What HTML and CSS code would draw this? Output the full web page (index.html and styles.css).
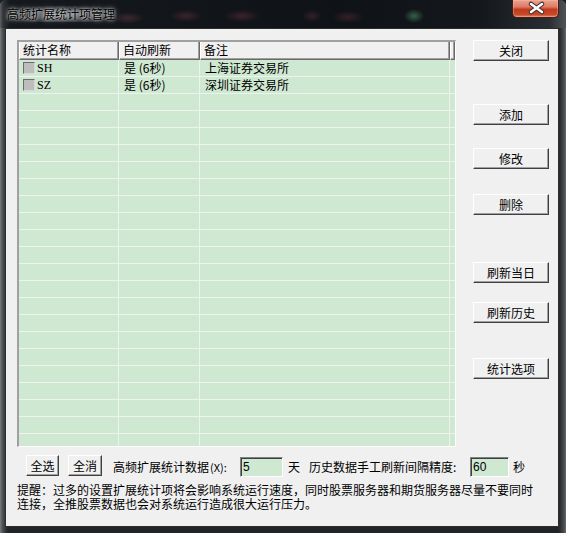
FILE: index.html
```html
<!DOCTYPE html>
<html lang="zh-CN">
<head>
<meta charset="utf-8">
<title>高频扩展统计项管理</title>
<link rel="stylesheet" href="styles.css">
</head>
<body>
<div class="window">
  <div class="titlebar">
    <div class="title">高频扩展统计项管理</div>
    <div class="close">
      <svg width="47" height="18" viewBox="0 0 47 18">
        <path d="M18 5 L29 13 M29 5 L18 13" stroke="#3a2a28" stroke-width="4.6" stroke-linecap="round" fill="none"/>
        <path d="M18 5 L29 13 M29 5 L18 13" stroke="#ffffff" stroke-width="2.6" stroke-linecap="round" fill="none"/>
      </svg>
    </div>
  </div>
  <div class="client">
    <div class="main">
      <div class="list">
        <div class="head">
          <div class="hcell">统计名称</div>
          <div class="hcell">自动刷新</div>
          <div class="hcell">备注</div>
          <div class="hcell"></div>
        </div>
        <div class="row">
          <div class="cell"><span class="check"></span><span class="code">SH</span></div>
          <div class="cell">是 (6秒)</div>
          <div class="cell">上海证券交易所</div>
          <div class="cell"></div>
        </div>
        <div class="row">
          <div class="cell"><span class="check"></span><span class="code">SZ</span></div>
          <div class="cell">是 (6秒)</div>
          <div class="cell">深圳证券交易所</div>
          <div class="cell"></div>
        </div>
        <div class="row"><div class="cell"></div><div class="cell"></div><div class="cell"></div><div class="cell"></div></div>
        <div class="row"><div class="cell"></div><div class="cell"></div><div class="cell"></div><div class="cell"></div></div>
        <div class="row"><div class="cell"></div><div class="cell"></div><div class="cell"></div><div class="cell"></div></div>
        <div class="row"><div class="cell"></div><div class="cell"></div><div class="cell"></div><div class="cell"></div></div>
        <div class="row"><div class="cell"></div><div class="cell"></div><div class="cell"></div><div class="cell"></div></div>
        <div class="row"><div class="cell"></div><div class="cell"></div><div class="cell"></div><div class="cell"></div></div>
        <div class="row"><div class="cell"></div><div class="cell"></div><div class="cell"></div><div class="cell"></div></div>
        <div class="row"><div class="cell"></div><div class="cell"></div><div class="cell"></div><div class="cell"></div></div>
        <div class="row"><div class="cell"></div><div class="cell"></div><div class="cell"></div><div class="cell"></div></div>
        <div class="row"><div class="cell"></div><div class="cell"></div><div class="cell"></div><div class="cell"></div></div>
        <div class="row"><div class="cell"></div><div class="cell"></div><div class="cell"></div><div class="cell"></div></div>
        <div class="row"><div class="cell"></div><div class="cell"></div><div class="cell"></div><div class="cell"></div></div>
        <div class="row"><div class="cell"></div><div class="cell"></div><div class="cell"></div><div class="cell"></div></div>
        <div class="row"><div class="cell"></div><div class="cell"></div><div class="cell"></div><div class="cell"></div></div>
        <div class="row"><div class="cell"></div><div class="cell"></div><div class="cell"></div><div class="cell"></div></div>
        <div class="row"><div class="cell"></div><div class="cell"></div><div class="cell"></div><div class="cell"></div></div>
        <div class="row"><div class="cell"></div><div class="cell"></div><div class="cell"></div><div class="cell"></div></div>
        <div class="row"><div class="cell"></div><div class="cell"></div><div class="cell"></div><div class="cell"></div></div>
        <div class="row"><div class="cell"></div><div class="cell"></div><div class="cell"></div><div class="cell"></div></div>
        <div class="row"><div class="cell"></div><div class="cell"></div><div class="cell"></div><div class="cell"></div></div>
        <div class="row"><div class="cell"></div><div class="cell"></div><div class="cell"></div><div class="cell"></div></div>
      </div>
      <div class="side">
        <button class="btn">关闭</button>
        <button class="btn gap-add">添加</button>
        <button class="btn gap-edit">修改</button>
        <button class="btn gap-del">删除</button>
        <button class="btn gap-today">刷新当日</button>
        <button class="btn gap-hist">刷新历史</button>
        <button class="btn gap-opt">统计选项</button>
      </div>
    </div>
    <div class="bottom">
      <button class="btn sel-all">全选</button>
      <button class="btn sel-none">全消</button>
      <div class="label label-days">高频扩展统计数据<span class="hot">(X):</span></div>
      <input class="field field-days" type="text" value="5">
      <div class="unit unit-days">天</div>
      <div class="label label-interval">历史数据手工刷新间隔精度:</div>
      <input class="field field-interval" type="text" value="60">
      <div class="unit unit-sec">秒</div>
    </div>
    <div class="note">
      <div class="note-line">提醒：过多的设置扩展统计项将会影响系统运行速度，同时股票服务器和期货服务器尽量不要同时</div>
      <div class="note-line">连接，全推股票数据也会对系统运行造成很大运行压力。</div>
    </div>
  </div>
</div>
</body>
</html>
```
FILE: styles.css
```css
html, body {
  margin: 0;
  padding: 0;
}
body {
  width: 566px;
  height: 533px;
  overflow: hidden;
  background: #1c1f23;
  font-family: "Noto Sans CJK SC", "Noto Sans", sans-serif;
  font-size: 12px;
  color: #000;
}
.window {
  width: 566px;
  height: 533px;
  box-sizing: border-box;
  background: linear-gradient(90deg, #7a7c7e 0px, #55585b 2px, #35383c 5px, #202327 8px, #202327 558px, #2b2e31 560px, #4a4d50 564px, #6a6c6e 566px);
  border-radius: 6px 6px 0 0;
  overflow: hidden;
}
.titlebar {
  height: 28px;
  display: flex;
  align-items: flex-start;
  background:
    radial-gradient(ellipse 16px 6px at 128px 18px, rgba(140, 70, 85, 0.35), transparent),
    radial-gradient(ellipse 16px 6px at 186px 16px, rgba(140, 60, 80, 0.35), transparent),
    radial-gradient(ellipse 18px 6px at 242px 16px, rgba(140, 60, 80, 0.35), transparent),
    radial-gradient(ellipse 10px 6px at 312px 16px, rgba(140, 60, 80, 0.3), transparent),
    radial-gradient(ellipse 16px 6px at 348px 17px, rgba(140, 60, 80, 0.3), transparent),
    radial-gradient(ellipse 10px 7px at 414px 16px, rgba(90, 170, 120, 0.5), transparent),
    linear-gradient(90deg, #5d6064 0px, #303438 3px, #15191d 10px, #0f1317 60%, #14181c 85%, #2a2d31 97%, #505356 100%);
}
.title {
  margin: 6px 0 0 5px;
  padding: 0 2px;
  line-height: 16px;
  font-size: 12px;
  color: #000;
  background: radial-gradient(ellipse 60px 10px at 50% 55%, rgba(210, 215, 220, 0.55), rgba(210, 215, 220, 0) 100%);
  text-shadow: 0 0 3px rgba(255, 255, 255, 0.9), 0 0 6px rgba(255, 255, 255, 0.6);
}
.close {
  margin-left: auto;
  margin-right: 7px;
  width: 47px;
  height: 18px;
  box-sizing: border-box;
  border: 1px solid #4a1d14;
  border-top: none;
  border-radius: 0 0 5px 5px;
  background: linear-gradient(180deg, #e9a391 0%, #dc7d66 40%, #c4391c 55%, #c54a2a 85%, #dc8a68 100%);
  box-shadow: inset 0 0 0 1px rgba(255, 200, 180, 0.35);
}
.close svg {
  display: block;
  margin-top: -1px;
}
.client {
  margin-left: 5px;
  width: 554px;
  height: 499px;
  box-sizing: border-box;
  border: 1px solid #2c2c2c;
  background: #f0f0f0;
  padding: 11px 0 0 11px;
}
.main {
  display: flex;
  align-items: flex-start;
}
.list {
  width: 439px;
  height: 407px;
  box-sizing: border-box;
  border-top: 2px solid #a0a0a0;
  border-left: 2px solid #a0a0a0;
  border-right: 1px solid #ffffff;
  border-bottom: 1px solid #ffffff;
  background: #cfe8d1;
  overflow: hidden;
}
.head,
.row {
  display: grid;
  grid-template-columns: 100px 81px 250px 5px;
}
.head {
  height: 18px;
  background: #f0f0f0;
}
.hcell {
  box-sizing: border-box;
  height: 18px;
  border-left: 1px solid #ffffff;
  border-right: 1px solid #6a6a6a;
  border-bottom: 1px solid #6a6a6a;
  box-shadow: inset -1px -1px #a0a0a0;
  padding-left: 3px;
  line-height: 16px;
  white-space: nowrap;
  overflow: hidden;
}
.row {
  height: 17px;
  box-sizing: border-box;
  border-bottom: 1px solid #edf4ed;
}
.cell {
  box-sizing: border-box;
  border-right: 1px solid #edf4ed;
  line-height: 16px;
  padding-left: 5px;
  white-space: nowrap;
  overflow: hidden;
  display: flex;
  align-items: center;
}
.check {
  width: 12px;
  height: 12px;
  box-sizing: border-box;
  margin-left: -1px;
  border-top: 1px solid #6c6c6c;
  border-left: 1px solid #6c6c6c;
  border-right: 1px solid #d8d8d8;
  border-bottom: 1px solid #d8d8d8;
  background: #bdbdbd;
  flex: none;
}
.code {
  margin-left: 2px;
  font-family: "Liberation Serif", serif;
  font-size: 12px;
}
.side {
  margin-left: 17px;
  display: flex;
  flex-direction: column;
}
.btn {
  width: 76px;
  height: 21px;
  box-sizing: border-box;
  margin: 0;
  padding: 0;
  background: #f0f0f0;
  border: 1px solid;
  border-color: #ffffff #404040 #404040 #ffffff;
  box-shadow: inset -1px -1px #a0a0a0;
  font-family: inherit;
  font-size: 12px;
  line-height: 18px;
  color: #000;
  text-align: center;
}
.gap-add { margin-top: 43px; }
.gap-edit { margin-top: 23px; }
.gap-del { margin-top: 25px; }
.gap-today { margin-top: 47px; }
.gap-hist { margin-top: 19px; }
.gap-opt { margin-top: 35px; }
.bottom {
  display: flex;
  align-items: flex-start;
  margin-top: 8px;
  height: 22px;
}
.btn.sel-all {
  margin-left: 9px;
  width: 33px;
}
.btn.sel-none {
  margin-left: 9px;
  width: 34px;
}
.label,
.unit {
  margin-top: 2px;
  line-height: 20px;
  white-space: nowrap;
}
.label-days {
  margin-left: 11px;
  width: 127px;
}
.hot {
  font-size: 11px;
  margin-left: 1px;
}
.label-interval {
  margin-left: 9px;
  width: 161px;
}
.unit-days {
  margin-left: 5px;
  width: 12px;
}
.unit-sec {
  margin-left: 4px;
}
.field {
  margin: 2px 0 0 0;
  height: 20px;
  box-sizing: border-box;
  padding: 0 0 0 2px;
  border-top: 1px solid #808080;
  border-left: 1px solid #808080;
  border-right: 1px solid #ffffff;
  border-bottom: 1px solid #ffffff;
  box-shadow: inset 1px 1px #404040;
  background: #cfe8d1;
  font-family: "Liberation Sans", sans-serif;
  font-size: 12px;
  color: #000;
  outline: none;
}
.field-days {
  width: 43px;
}
.field-interval {
  width: 39px;
}
.note {
  margin-top: 8px;
  font-family: "Liberation Sans", "Noto Sans CJK SC", sans-serif;
}
.note-line {
  height: 13.5px;
  line-height: 13.5px;
  white-space: nowrap;
}
```
